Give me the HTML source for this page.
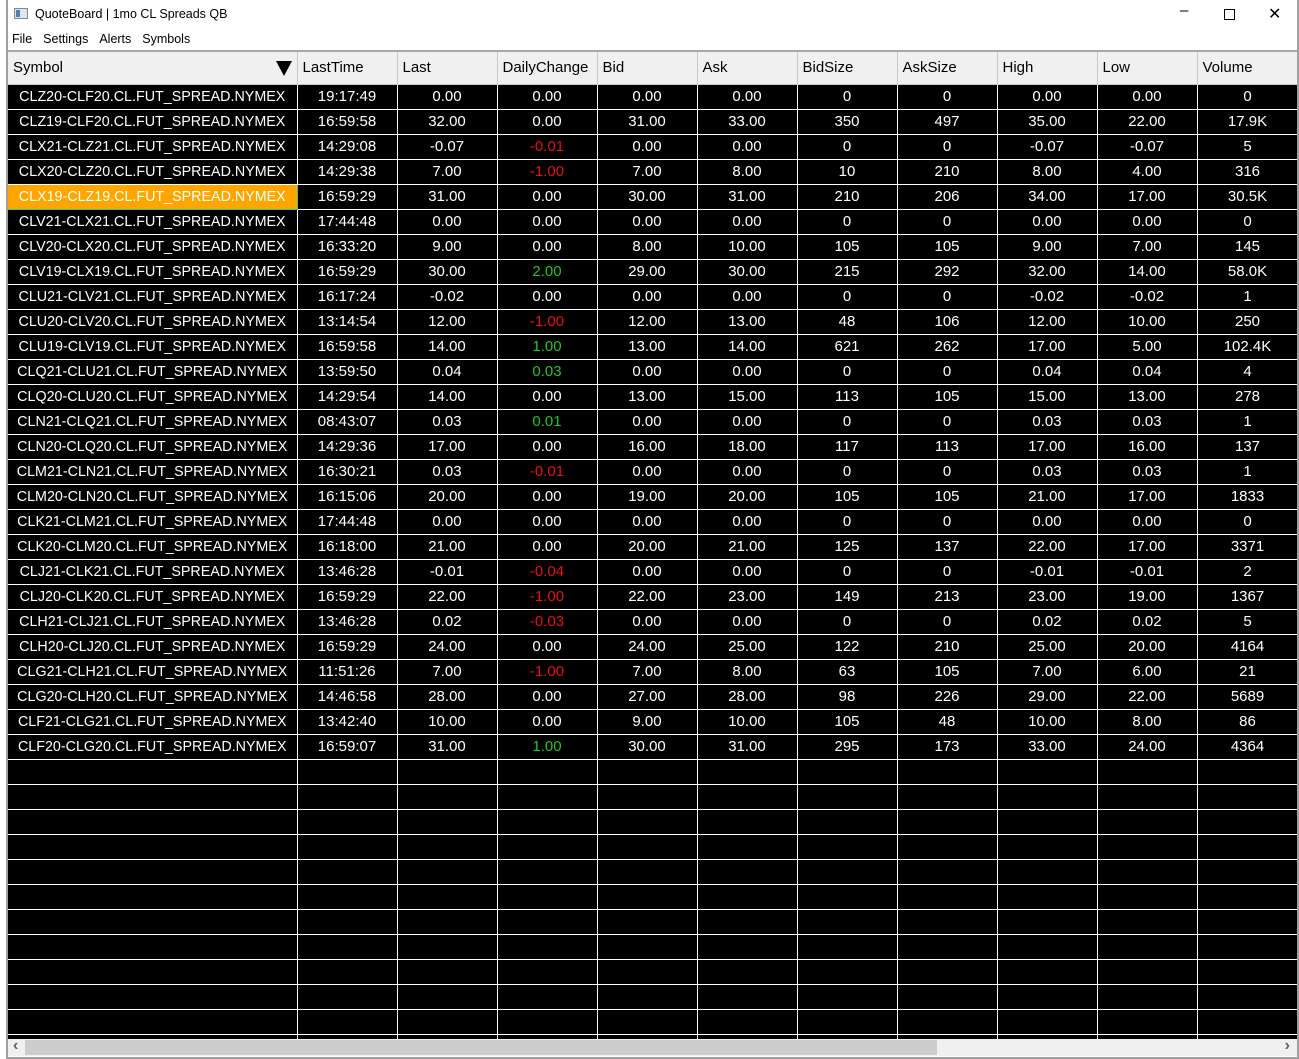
<!DOCTYPE html>
<html><head><meta charset="utf-8">
<style>
*{margin:0;padding:0;box-sizing:border-box}
body{width:1299px;height:1059px;background:#fff;position:relative;overflow:hidden;font-family:"Liberation Sans",sans-serif}
#lb{position:absolute;left:6px;top:0;width:2px;height:1059px;background:#a0a0a0}
#rb{position:absolute;left:1297px;top:0;width:2px;height:1059px;background:#a0a0a0}
#title{position:absolute;left:35px;top:7px;font-size:12.5px;color:#000}
#ico{position:absolute;left:14px;top:8px;width:14px;height:11px;border:1px solid #7a8a9a;background:#dfe6ee}
#ico:before{content:"";position:absolute;left:1px;top:1px;width:4px;height:7px;background:#4a7fb0}
.wc{position:absolute;top:4px;font-size:15px;color:#000}
#menu{position:absolute;left:12px;top:32px;font-size:12.5px}
#menu span{margin-right:11px}
#grid{position:absolute;left:8px;top:50px;width:1289px;height:989px;overflow:hidden;background:#000}
table{border-collapse:collapse;table-layout:fixed;width:1290px}
th{height:33px;background:#f0f0f0;border-top:2px solid #a8a8a8;border-right:1px solid #c8c8c8;border-bottom:1px solid #c8c8c8;font-weight:normal;text-align:left;padding-left:5px;font-size:15px;color:#000;position:relative}
td{height:25px;border:1px solid #fff;border-top:none;color:#fff;text-align:center;font-size:15px;white-space:nowrap;overflow:hidden}
td:first-child{border-left:none;font-size:14.3px}
.r{color:#e81010}.g{color:#1ec81e}
.hl{background:#ffa500;border:1px solid #6ac04a}
#tri{position:absolute;right:5px;top:9px;width:0;height:0;border-left:8px solid transparent;border-right:8px solid transparent;border-top:15px solid #000}
#sb{position:absolute;left:8px;top:1039px;width:1289px;height:17px;background:#f0f0f0}
#thumb{position:absolute;left:17px;top:1px;width:912px;height:15px;background:#cdcdcd}
.ar{position:absolute;top:-2px;font-size:16px;color:#606060;font-weight:bold}
#bb{position:absolute;left:6px;top:1057px;width:1293px;height:2px;background:#a0a0a0}
</style></head><body>
<div id="lb"></div><div id="rb"></div>
<div id="ico"></div>
<div id="title">QuoteBoard | 1mo CL Spreads QB</div>
<div class="wc" style="left:1180px;top:2px">&#8211;</div>
<div style="position:absolute;left:1224px;top:9px;width:11px;height:11px;border:1px solid #000"></div>
<div class="wc" style="left:1268px;top:4px;font-size:16px">&#10005;</div>
<div id="menu"><span>File</span><span>Settings</span><span>Alerts</span><span>Symbols</span></div>
<div id="grid">
<table>
<colgroup><col style="width:289px"><col style="width:100px"><col style="width:100px"><col style="width:100px"><col style="width:100px"><col style="width:100px"><col style="width:100px"><col style="width:100px"><col style="width:100px"><col style="width:100px"><col style="width:101px"></colgroup>
<tr><th>Symbol<div id="tri"></div></th><th>LastTime</th><th>Last</th><th>DailyChange</th><th>Bid</th><th>Ask</th><th>BidSize</th><th>AskSize</th><th>High</th><th>Low</th><th>Volume</th></tr>
<tr><td>CLZ20-CLF20.CL.FUT_SPREAD.NYMEX</td><td>19:17:49</td><td>0.00</td><td>0.00</td><td>0.00</td><td>0.00</td><td>0</td><td>0</td><td>0.00</td><td>0.00</td><td>0</td></tr>
<tr><td>CLZ19-CLF20.CL.FUT_SPREAD.NYMEX</td><td>16:59:58</td><td>32.00</td><td>0.00</td><td>31.00</td><td>33.00</td><td>350</td><td>497</td><td>35.00</td><td>22.00</td><td>17.9K</td></tr>
<tr><td>CLX21-CLZ21.CL.FUT_SPREAD.NYMEX</td><td>14:29:08</td><td>-0.07</td><td class="r">-0.01</td><td>0.00</td><td>0.00</td><td>0</td><td>0</td><td>-0.07</td><td>-0.07</td><td>5</td></tr>
<tr><td>CLX20-CLZ20.CL.FUT_SPREAD.NYMEX</td><td>14:29:38</td><td>7.00</td><td class="r">-1.00</td><td>7.00</td><td>8.00</td><td>10</td><td>210</td><td>8.00</td><td>4.00</td><td>316</td></tr>
<tr><td class="hl">CLX19-CLZ19.CL.FUT_SPREAD.NYMEX</td><td>16:59:29</td><td>31.00</td><td>0.00</td><td>30.00</td><td>31.00</td><td>210</td><td>206</td><td>34.00</td><td>17.00</td><td>30.5K</td></tr>
<tr><td>CLV21-CLX21.CL.FUT_SPREAD.NYMEX</td><td>17:44:48</td><td>0.00</td><td>0.00</td><td>0.00</td><td>0.00</td><td>0</td><td>0</td><td>0.00</td><td>0.00</td><td>0</td></tr>
<tr><td>CLV20-CLX20.CL.FUT_SPREAD.NYMEX</td><td>16:33:20</td><td>9.00</td><td>0.00</td><td>8.00</td><td>10.00</td><td>105</td><td>105</td><td>9.00</td><td>7.00</td><td>145</td></tr>
<tr><td>CLV19-CLX19.CL.FUT_SPREAD.NYMEX</td><td>16:59:29</td><td>30.00</td><td class="g">2.00</td><td>29.00</td><td>30.00</td><td>215</td><td>292</td><td>32.00</td><td>14.00</td><td>58.0K</td></tr>
<tr><td>CLU21-CLV21.CL.FUT_SPREAD.NYMEX</td><td>16:17:24</td><td>-0.02</td><td>0.00</td><td>0.00</td><td>0.00</td><td>0</td><td>0</td><td>-0.02</td><td>-0.02</td><td>1</td></tr>
<tr><td>CLU20-CLV20.CL.FUT_SPREAD.NYMEX</td><td>13:14:54</td><td>12.00</td><td class="r">-1.00</td><td>12.00</td><td>13.00</td><td>48</td><td>106</td><td>12.00</td><td>10.00</td><td>250</td></tr>
<tr><td>CLU19-CLV19.CL.FUT_SPREAD.NYMEX</td><td>16:59:58</td><td>14.00</td><td class="g">1.00</td><td>13.00</td><td>14.00</td><td>621</td><td>262</td><td>17.00</td><td>5.00</td><td>102.4K</td></tr>
<tr><td>CLQ21-CLU21.CL.FUT_SPREAD.NYMEX</td><td>13:59:50</td><td>0.04</td><td class="g">0.03</td><td>0.00</td><td>0.00</td><td>0</td><td>0</td><td>0.04</td><td>0.04</td><td>4</td></tr>
<tr><td>CLQ20-CLU20.CL.FUT_SPREAD.NYMEX</td><td>14:29:54</td><td>14.00</td><td>0.00</td><td>13.00</td><td>15.00</td><td>113</td><td>105</td><td>15.00</td><td>13.00</td><td>278</td></tr>
<tr><td>CLN21-CLQ21.CL.FUT_SPREAD.NYMEX</td><td>08:43:07</td><td>0.03</td><td class="g">0.01</td><td>0.00</td><td>0.00</td><td>0</td><td>0</td><td>0.03</td><td>0.03</td><td>1</td></tr>
<tr><td>CLN20-CLQ20.CL.FUT_SPREAD.NYMEX</td><td>14:29:36</td><td>17.00</td><td>0.00</td><td>16.00</td><td>18.00</td><td>117</td><td>113</td><td>17.00</td><td>16.00</td><td>137</td></tr>
<tr><td>CLM21-CLN21.CL.FUT_SPREAD.NYMEX</td><td>16:30:21</td><td>0.03</td><td class="r">-0.01</td><td>0.00</td><td>0.00</td><td>0</td><td>0</td><td>0.03</td><td>0.03</td><td>1</td></tr>
<tr><td>CLM20-CLN20.CL.FUT_SPREAD.NYMEX</td><td>16:15:06</td><td>20.00</td><td>0.00</td><td>19.00</td><td>20.00</td><td>105</td><td>105</td><td>21.00</td><td>17.00</td><td>1833</td></tr>
<tr><td>CLK21-CLM21.CL.FUT_SPREAD.NYMEX</td><td>17:44:48</td><td>0.00</td><td>0.00</td><td>0.00</td><td>0.00</td><td>0</td><td>0</td><td>0.00</td><td>0.00</td><td>0</td></tr>
<tr><td>CLK20-CLM20.CL.FUT_SPREAD.NYMEX</td><td>16:18:00</td><td>21.00</td><td>0.00</td><td>20.00</td><td>21.00</td><td>125</td><td>137</td><td>22.00</td><td>17.00</td><td>3371</td></tr>
<tr><td>CLJ21-CLK21.CL.FUT_SPREAD.NYMEX</td><td>13:46:28</td><td>-0.01</td><td class="r">-0.04</td><td>0.00</td><td>0.00</td><td>0</td><td>0</td><td>-0.01</td><td>-0.01</td><td>2</td></tr>
<tr><td>CLJ20-CLK20.CL.FUT_SPREAD.NYMEX</td><td>16:59:29</td><td>22.00</td><td class="r">-1.00</td><td>22.00</td><td>23.00</td><td>149</td><td>213</td><td>23.00</td><td>19.00</td><td>1367</td></tr>
<tr><td>CLH21-CLJ21.CL.FUT_SPREAD.NYMEX</td><td>13:46:28</td><td>0.02</td><td class="r">-0.03</td><td>0.00</td><td>0.00</td><td>0</td><td>0</td><td>0.02</td><td>0.02</td><td>5</td></tr>
<tr><td>CLH20-CLJ20.CL.FUT_SPREAD.NYMEX</td><td>16:59:29</td><td>24.00</td><td>0.00</td><td>24.00</td><td>25.00</td><td>122</td><td>210</td><td>25.00</td><td>20.00</td><td>4164</td></tr>
<tr><td>CLG21-CLH21.CL.FUT_SPREAD.NYMEX</td><td>11:51:26</td><td>7.00</td><td class="r">-1.00</td><td>7.00</td><td>8.00</td><td>63</td><td>105</td><td>7.00</td><td>6.00</td><td>21</td></tr>
<tr><td>CLG20-CLH20.CL.FUT_SPREAD.NYMEX</td><td>14:46:58</td><td>28.00</td><td>0.00</td><td>27.00</td><td>28.00</td><td>98</td><td>226</td><td>29.00</td><td>22.00</td><td>5689</td></tr>
<tr><td>CLF21-CLG21.CL.FUT_SPREAD.NYMEX</td><td>13:42:40</td><td>10.00</td><td>0.00</td><td>9.00</td><td>10.00</td><td>105</td><td>48</td><td>10.00</td><td>8.00</td><td>86</td></tr>
<tr><td>CLF20-CLG20.CL.FUT_SPREAD.NYMEX</td><td>16:59:07</td><td>31.00</td><td class="g">1.00</td><td>30.00</td><td>31.00</td><td>295</td><td>173</td><td>33.00</td><td>24.00</td><td>4364</td></tr>
<tr><td></td><td></td><td></td><td></td><td></td><td></td><td></td><td></td><td></td><td></td><td></td></tr>
<tr><td></td><td></td><td></td><td></td><td></td><td></td><td></td><td></td><td></td><td></td><td></td></tr>
<tr><td></td><td></td><td></td><td></td><td></td><td></td><td></td><td></td><td></td><td></td><td></td></tr>
<tr><td></td><td></td><td></td><td></td><td></td><td></td><td></td><td></td><td></td><td></td><td></td></tr>
<tr><td></td><td></td><td></td><td></td><td></td><td></td><td></td><td></td><td></td><td></td><td></td></tr>
<tr><td></td><td></td><td></td><td></td><td></td><td></td><td></td><td></td><td></td><td></td><td></td></tr>
<tr><td></td><td></td><td></td><td></td><td></td><td></td><td></td><td></td><td></td><td></td><td></td></tr>
<tr><td></td><td></td><td></td><td></td><td></td><td></td><td></td><td></td><td></td><td></td><td></td></tr>
<tr><td></td><td></td><td></td><td></td><td></td><td></td><td></td><td></td><td></td><td></td><td></td></tr>
<tr><td></td><td></td><td></td><td></td><td></td><td></td><td></td><td></td><td></td><td></td><td></td></tr>
<tr><td></td><td></td><td></td><td></td><td></td><td></td><td></td><td></td><td></td><td></td><td></td></tr>
<tr><td></td><td></td><td></td><td></td><td></td><td></td><td></td><td></td><td></td><td></td><td></td></tr>
</table>
</div>
<div id="sb"><div class="ar" style="left:5px">&lsaquo;</div><div id="thumb"></div><div class="ar" style="right:7px">&rsaquo;</div></div>
<div id="bb"></div>
</body></html>
